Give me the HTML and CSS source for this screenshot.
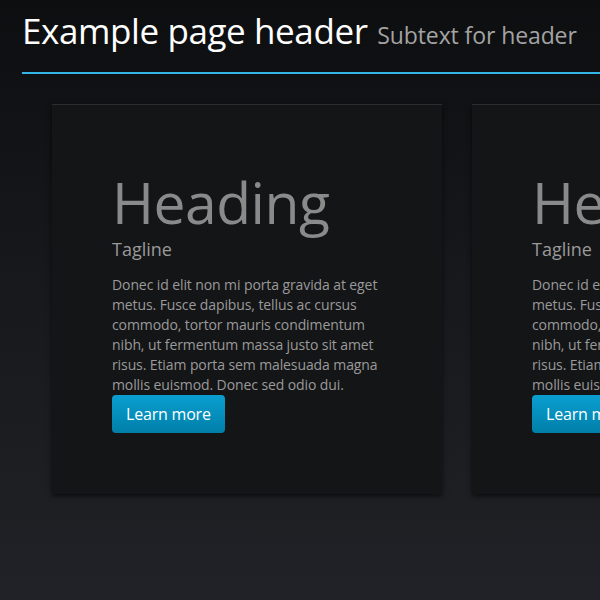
FILE: index.html
```html
<!DOCTYPE html>
<html>
<head>
<meta charset="utf-8">
<link rel="stylesheet" href="styles.css">
</head>
<body>
<div class="page">
  <header class="page-header">
    <h1 class="title">Example page header <small class="subtext">Subtext for header</small></h1>
  </header>
  <div class="cards">
    <section class="card">
      <h2 class="heading">Heading</h2>
      <p class="tagline">Tagline</p>
      <p class="body">Donec id elit non mi porta gravida at eget metus. Fusce dapibus, tellus ac cursus commodo, tortor mauris condimentum nibh, ut fermentum massa justo sit amet risus. Etiam porta sem malesuada magna mollis euismod. Donec sed odio dui.</p>
      <a class="btn" href="#">Learn more</a>
    </section>
    <section class="card">
      <h2 class="heading">Heading</h2>
      <p class="tagline">Tagline</p>
      <p class="body">Donec id elit non mi porta gravida at eget metus. Fusce dapibus, tellus ac cursus commodo, tortor mauris condimentum nibh, ut fermentum massa justo sit amet risus. Etiam porta sem malesuada magna mollis euismod. Donec sed odio dui.</p>
      <a class="btn" href="#">Learn more</a>
    </section>
  </div>
</div>
</body>
</html>
```

FILE: styles.css
```css
html, body {
  margin: 0;
  padding: 0;
  height: 100%;
}
body {
  background: linear-gradient(to bottom, #0d0e10 0%, #16181b 45%, #202227 100%);
  font-family: "Open Sans", "Noto Sans", sans-serif;
  overflow: hidden;
}
.page {
  width: 600px;
  height: 600px;
  overflow: hidden;
}
.page-header {
  margin-left: 22px;
  border-bottom: 2px solid #33b5e5;
  height: 74px;
  box-sizing: border-box;
}
.title {
  margin: 0;
  padding-top: 7px;
  font-weight: normal;
  font-size: 35px;
  letter-spacing: -0.4px;
  line-height: 48px;
  color: #ffffff;
  white-space: nowrap;
}
.subtext {
  font-size: 23px;
  letter-spacing: -0.1px;
  color: #a3a3a3;
  margin-left: 1px;
}
.cards {
  display: flex;
  gap: 30px;
  margin-top: 30px;
  margin-left: 52px;
}
.card {
  flex: 0 0 390px;
  height: 390px;
  box-sizing: border-box;
  padding: 67px 60px 0 60px;
  background: #141517;
  border-top: 1px solid #2c2d2f;
  box-shadow: 0 2px 5px rgba(0, 0, 0, 0.6);
}
.heading {
  margin: 0;
  font-weight: normal;
  font-size: 57px;
  letter-spacing: -0.5px;
  line-height: 60px;
  color: #8a8a8a;
}
.tagline {
  margin: 5px 0 0 0;
  font-size: 18px;
  line-height: 24px;
  color: #9a9a9a;
}
.body {
  margin: 14px 0 0 0;
  font-size: 14px;
  letter-spacing: -0.1px;
  line-height: 20px;
  color: #9a9a9a;
}
.btn {
  display: inline-block;
  height: 38px;
  line-height: 38px;
  padding: 0 14px;
  border-radius: 4px;
  background: linear-gradient(to bottom, #0a9fd1 0%, #007fa8 100%);
  color: #ffffff;
  font-size: 16px;
  letter-spacing: -0.2px;
  text-decoration: none;
  white-space: nowrap;
}
```
